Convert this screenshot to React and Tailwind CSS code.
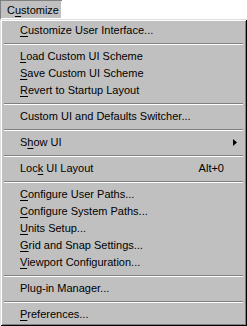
import React from "react";

const items = [
  { label: "Customize User Interface...", key: 0 },
  "sep",
  { label: "Load Custom UI Scheme", key: 0 },
  { label: "Save Custom UI Scheme", key: 0 },
  { label: "Revert to Startup Layout", key: 0 },
  "sep",
  { label: "Custom UI and Defaults Switcher...", key: -1 },
  "sep",
  { label: "Show UI", key: 1, arrow: true },
  "sep",
  { label: "Lock UI Layout", key: 3, shortcut: "Alt+0" },
  "sep",
  { label: "Configure User Paths...", key: 0 },
  { label: "Configure System Paths...", key: 0 },
  { label: "Units Setup...", key: 0 },
  { label: "Grid and Snap Settings...", key: 0 },
  { label: "Viewport Configuration...", key: 0 },
  "sep",
  { label: "Plug-in Manager...", key: -1 },
  "sep",
  { label: "Preferences...", key: 0 },
];

function Label({ text, k }) {
  if (k < 0) return <span>{text}</span>;
  return (
    <span>
      {text.slice(0, k)}
      <span className="underline underline-offset-[2px]">{text[k]}</span>
      {text.slice(k + 1)}
    </span>
  );
}

export default function App() {
  return (
    <div className="w-[247px] h-[326px] bg-white font-['Liberation_Sans',sans-serif] text-[11px] text-black leading-none overflow-hidden">
      <div className="w-[62px] h-[19px] bg-[#c0c0c0] border-t border-l border-[#808080] shadow-[inset_-1px_-1px_#fff] flex items-center pl-[6px]">
        <Label text="Customize" k={1} />
      </div>
      <div className="h-[307px] bg-[#c0c0c0] p-[3px] shadow-[inset_1px_1px_#dfdfdf,inset_-1px_-1px_#000,inset_2px_2px_#fff,inset_-2px_-2px_#808080]">
        {items.map((it, i) =>
          it === "sep" ? (
            <div key={i} className="h-[9px] pt-[4px] mx-px">
              <div className="h-px bg-[#808080]" />
              <div className="h-px bg-white" />
            </div>
          ) : (
            <div key={i} className="h-[17px] flex items-center pl-[17px] pr-[6px]">
              <Label text={it.label} k={it.key} />
              <div className="flex-1" />
              {it.shortcut && <span className="mr-[14px]">{it.shortcut}</span>}
              {it.arrow && (
                <svg width="4" height="7" viewBox="0 0 4 7" className="mr-[1px]">
                  <path d="M0 0 L4 3.5 L0 7 Z" fill="#000" />
                </svg>
              )}
            </div>
          )
        )}
      </div>
    </div>
  );
}
